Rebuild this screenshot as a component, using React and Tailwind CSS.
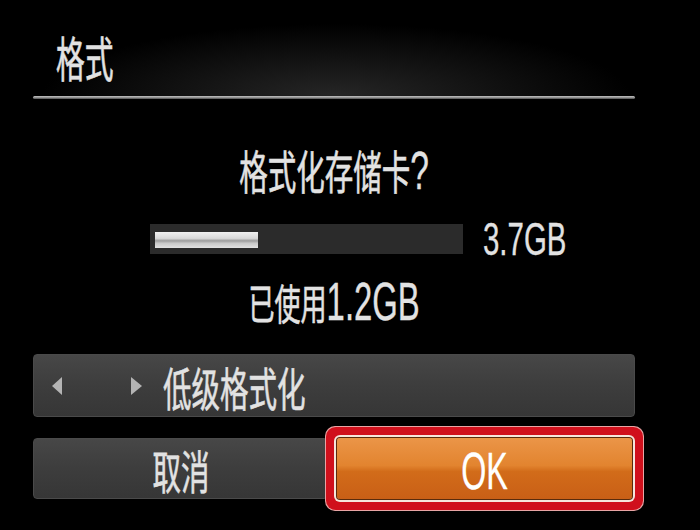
import React from "react";

// camera-style condensed text: squeeze glyphs horizontally
function Squeeze({ children, className = "" }) {
  return (
    <span className={`inline-block whitespace-nowrap leading-none [-webkit-text-stroke:0.6px_currentColor] ${className}`}>
      {children}
    </span>
  );
}

function Latin({ children, className = "" }) {
  return <span className={`font-['Liberation_Sans',sans-serif] [-webkit-text-stroke:0.3px_currentColor] ${className}`}>{children}</span>;
}

export default function App() {
  return (
    <div className="w-[700px] h-[530px] bg-black overflow-hidden flex flex-col text-[#e2e2e2] font-['Noto_Sans_CJK_SC','Liberation_Sans',sans-serif]">
      {/* header with soft glow */}
      <div className="h-[96px] pl-[56px] pt-[32px] bg-[radial-gradient(ellipse_42%_75%_at_48%_100%,#262626_0%,#111111_55%,#000000_100%)]">
        <Squeeze className="text-[48px] h-[48px] scale-x-[0.6] origin-left">格式</Squeeze>
      </div>
      <div className="ml-[33px] w-[602px] h-[3px] rounded-full bg-[linear-gradient(180deg,#c4c4c4,#8a8a8a_60%,#4a4a4a)] shadow-[0_2px_3px_#000]" />

      <div className="ml-[33px] w-[602px] flex flex-col">
        {/* question */}
        <div className="mt-[44px] h-[46px] flex justify-center">
          <Squeeze className="text-[46px] scale-x-[0.62] origin-center">
            格式化存储卡<Latin className="text-[54px]">?</Latin>
          </Squeeze>
        </div>

        {/* capacity bar */}
        <div className="mt-[35px] h-[30px] flex items-center">
          <div className="ml-[117px] w-[313px] h-[30px] bg-[#2b2b2b] pl-[5px] flex items-center">
            <div className="w-[103px] h-[16px] mt-[2px] bg-[linear-gradient(180deg,#f0f0f0_0%,#d8d8d8_40%,#9c9c9c_55%,#c8c8c8_70%,#e2e2e2_100%)]" />
          </div>
          <Squeeze className="ml-[20px] -mt-[4px] text-[46px] scale-x-[0.64] origin-left">
            <Latin>3.7GB</Latin>
          </Squeeze>
        </div>

        {/* used */}
        <div className="mt-[21px] h-[46px] flex justify-center">
          <Squeeze className="text-[42px] scale-x-[0.62] origin-center">
            已使用<Latin className="text-[53px]">1.2GB</Latin>
          </Squeeze>
        </div>

        {/* low level format option */}
        <div className="mt-[33px] h-[63px] rounded-[4px] border border-[#4a4a4a] bg-[linear-gradient(180deg,#474747,#3d3d3d_50%,#363636)] flex items-center pl-[18px]">
          <svg width="10" height="18" viewBox="0 0 10 18">
            <path d="M10 0 L0 9 L10 18 Z" fill="#b4b4b4" />
          </svg>
          <svg className="ml-[69px]" width="11" height="18" viewBox="0 0 11 18">
            <path d="M0 0 L11 9 L0 18 Z" fill="#b4b4b4" />
          </svg>
          <Squeeze className="ml-[21px] text-[46px] scale-x-[0.62] origin-left">低级格式化</Squeeze>
        </div>

        {/* buttons */}
        <div className="mt-[21px] h-[61px] grid grid-cols-[295px_1fr] gap-[9px]">
          <div className="rounded-[4px] border border-[#4a4a4a] bg-[linear-gradient(180deg,#474747,#3d3d3d_50%,#363636)] flex items-center justify-center">
            <Squeeze className="text-[46px] scale-x-[0.62] origin-center">取消</Squeeze>
          </div>
          <div className="mr-[3px] rounded-[3px] bg-[linear-gradient(180deg,#eb9548_0%,#e2842f_45%,#d26c1a_55%,#c95f16_100%)] shadow-[0_0_0_1px_#5a2c0c,0_0_0_3px_#f6e6dc,0_0_0_11px_#d0101c,0_0_0_12px_#e8a4a4] flex items-center justify-center text-white">
            <Squeeze className="text-[52px] scale-x-[0.62] origin-center">
              <Latin>OK</Latin>
            </Squeeze>
          </div>
        </div>
      </div>
    </div>
  );
}
